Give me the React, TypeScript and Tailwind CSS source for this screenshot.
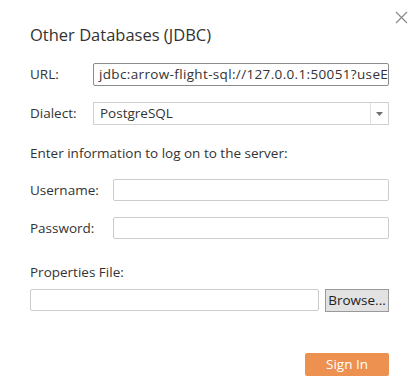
import React from "react";

export default function App() {
  const font = { fontFamily: '"Open Sans", "Noto Sans", sans-serif' };
  return (
    <div className="relative w-[415px] h-[383px] bg-white text-[#333333]" style={font}>
      <button className="absolute left-[395px] top-[11px] w-[13px] h-[13px]" aria-label="close">
        <svg width="13" height="13" viewBox="0 0 13 13">
          <path d="M1 1 L12 12 M12 1 L1 12" stroke="#8a8a8a" strokeWidth="1.2" fill="none" />
        </svg>
      </button>
      <div className="flex flex-col pl-[30px] pr-[26px] pt-[22px]">
        <h1 className="text-[16.5px] leading-[26px] h-[26px]">Other Databases (JDBC)</h1>
        <div className="flex items-center mt-[15px] h-[23px]">
          <span className="w-[63px] text-[13.5px]">URL:</span>
          <div className="flex-1 h-[23px] border border-[#8c8c8c] rounded-[2px] pl-[5px] flex items-center overflow-hidden whitespace-nowrap text-[13.5px]">
            <span className="shrink-0 tracking-[0.35px]">jdbc:arrow-flight-sql://127.0.0.1:50051?useEncryption=false</span>
          </div>
        </div>
        <div className="flex items-center mt-[16px] h-[23px]">
          <span className="w-[63px] text-[13.5px]">Dialect:</span>
          <div className="flex-1 h-[23px] border border-[#d0d0d0] flex items-center text-[13.5px]">
            <span className="flex-1 px-[6px]">PostgreSQL</span>
            <span className="w-[18px] h-full border-l border-[#e0e0e0] flex items-center justify-center">
              <svg width="7" height="4" viewBox="0 0 7 4"><path d="M0 0 H7 L3.5 4 Z" fill="#707070" /></svg>
            </span>
          </div>
        </div>
        <div className="mt-[19px] text-[13.5px] leading-[18px]">Enter information to log on to the server:</div>
        <div className="flex items-center mt-[17px] h-[22px]">
          <span className="w-[83px] text-[13.5px]">Username:</span>
          <div className="flex-1 h-[22px] border border-[#cccccc] rounded-[2px]" />
        </div>
        <div className="flex items-center mt-[16px] h-[22px]">
          <span className="w-[83px] text-[13.5px]">Password:</span>
          <div className="flex-1 h-[22px] border border-[#cccccc] rounded-[2px]" />
        </div>
        <div className="mt-[24px] text-[13.5px] leading-[18px]">Properties File:</div>
        <div className="flex items-center mt-[8px] h-[22px] gap-[6px]">
          <div className="flex-1 h-[22px] border border-[#cccccc] rounded-[2px]" />
          <button className="w-[64px] h-[23px] bg-[#e2e2e2] border border-[#999999] text-[13.5px] text-[#222222] flex items-center justify-center">
            Browse...
          </button>
        </div>
        <div className="flex justify-end mt-[42px]">
          <button className="w-[84px] h-[23px] rounded-[2px] bg-[#ec914f] text-white text-[13.5px] flex items-center justify-center">
            Sign In
          </button>
        </div>
      </div>
    </div>
  );
}
